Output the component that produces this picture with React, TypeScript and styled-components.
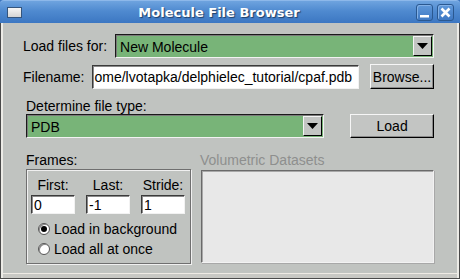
import React from "react";
import styled, { createGlobalStyle } from "styled-components";

const Global = createGlobalStyle`
  html, body { margin: 0; padding: 0; background: #ffffff; }
  body { font-family: "Liberation Sans", Arial, sans-serif; font-size: 14px; color: #000; }
  * { box-sizing: border-box; }
`;

const Window = styled.div`
  width: 460px;
  height: 279px;
  display: flex;
  flex-direction: column;
  overflow: hidden;
  background: #3b75bf;
`;

const TitleBar = styled.div`
  height: 23px;
  flex: none;
  display: flex;
  align-items: center;
  padding: 0 6px 0 7px;
  background: linear-gradient(#6ea3df 0%, #4f8ad0 45%, #3c77c2 100%);
  border-radius: 4px 4px 0 0;
  border-top: 1px solid #8db8ea;
`;

const WinIcon = styled.div`
  width: 15px;
  height: 11px;
  border: 1px solid #35557d;
  background: linear-gradient(#f6f6f6, #d4d4d4);
  margin-top: 1px;
`;

const Title = styled.div`
  flex: 1;
  text-align: center;
  font-family: "DejaVu Sans", sans-serif;
  font-weight: bold;
  font-size: 13px;
  color: #ffffff;
  text-shadow: 1px 1px 1px #1e3e68;
  padding-top: 1px;
`;

const TitleButtons = styled.div`
  display: flex;
  gap: 4px;
`;

const TitleButton = styled.div`
  width: 17px;
  height: 17px;
  border: 1px solid #2a5890;
  border-radius: 3px;
  background: linear-gradient(#5f98da, #3f79c3);
  box-shadow: inset 1px 1px 0 #82b0e6;
  display: flex;
  align-items: center;
  justify-content: center;
`;

const Body = styled.div`
  flex: 1;
  display: flex;
  flex-direction: column;
  background: #c0c3c0;
  border-left: 1px solid #4a4a4a;
  border-right: 1px solid #4a4a4a;
  border-bottom: 1px solid #4a4a4a;
  box-shadow: inset 2px 0 0 #ecebe6, inset -2px 0 0 #ecebe6, inset 0 -4px 0 #c8c8c4, inset 0 -5px 0 #eeeae4;
  padding: 11px 25px 0 22px;
`;

const Row = styled.div<{ $top?: number; $indent?: number }>`
  display: flex;
  align-items: center;
  margin-top: ${(p) => p.$top ?? 0}px;
  margin-left: ${(p) => p.$indent ?? 0}px;
`;

const Label = styled.span<{ $muted?: boolean }>`
  white-space: nowrap;
  line-height: 16px;
  color: ${(p) => (p.$muted ? "#8e8f8e" : "#000")};
`;

const Combo = styled.div<{ $w?: number }>`
  height: 24px;
  ${(p) => (p.$w ? `width: ${p.$w}px;` : "flex: 1;")}
  display: flex;
  align-items: center;
  background: #78b478;
  border-style: solid;
  border-width: 1px;
  border-color: #1a1a1a #f2f2f2 #f2f2f2 #1a1a1a;
  box-shadow: inset 1px 1px 0 #7a7a7a;
  padding: 0 1px 0 4px;
`;

const ComboText = styled.span`
  flex: 1;
  line-height: 16px;
  padding-top: 1px;
`;

const ArrowButton = styled.div`
  width: 19px;
  height: 20px;
  background: #c3c5c3;
  border-style: solid;
  border-width: 1px;
  border-color: #f4f4f4 #000 #000 #f4f4f4;
  display: flex;
  align-items: center;
  justify-content: center;
`;

const Entry = styled.div<{ $w?: number; $h?: number }>`
  ${(p) => (p.$w ? `width: ${p.$w}px;` : "flex: 1;")}
  height: ${(p) => p.$h ?? 24}px;
  background: #ffffff;
  border-style: solid;
  border-width: 1px;
  border-color: #3a3a3a #f2f2f2 #f2f2f2 #3a3a3a;
  box-shadow: inset 1px 1px 0 #8a8a8a;
  display: flex;
  align-items: center;
  overflow: hidden;
  white-space: nowrap;
  padding: 0 2px 0 2px;
  line-height: 16px;
`;

const Button = styled.div<{ $w: number; $h?: number }>`
  width: ${(p) => p.$w}px;
  height: ${(p) => p.$h ?? 25}px;
  background: #c3c5c3;
  border-style: solid;
  border-width: 1px;
  border-color: #f6f6f6 #000 #000 #f6f6f6;
  box-shadow: inset -1px -1px 0 #8a8a8a;
  display: flex;
  align-items: center;
  justify-content: center;
  line-height: 16px;
`;

const Panels = styled.div`
  display: flex;
  margin-top: 1px;
  margin-left: 3px;
`;

const FramesBox = styled.div`
  width: 165px;
  height: 95px;
  border: 1px solid #6f6f6f;
  box-shadow: 1px 1px 0 #f0f0f0, inset 1px 1px 0 #f0f0f0;
  padding: 7px 0 0 4px;
  display: flex;
  flex-direction: column;
`;

const FieldGrid = styled.div`
  display: grid;
  grid-template-columns: repeat(3, 44px);
  column-gap: 11px;
  row-gap: 2px;
  justify-items: center;
`;

const FieldLabel = styled.span`
  line-height: 16px;
`;

const RadioList = styled.div`
  display: flex;
  flex-direction: column;
  gap: 4px;
  margin-top: 7px;
  padding-left: 7px;
`;

const RadioRow = styled.div`
  display: flex;
  align-items: center;
  gap: 4px;
  line-height: 16px;
`;

const RadioDot = styled.div<{ $on?: boolean }>`
  width: 12px;
  height: 12px;
  border-radius: 50%;
  background: #ffffff;
  border: 1px solid #555;
  box-shadow: inset 1px 1px 0 #8a8a8a;
  display: flex;
  align-items: center;
  justify-content: center;
  &::after {
    content: "";
    width: 6px;
    height: 6px;
    border-radius: 50%;
    background: ${(p) => (p.$on ? "#000" : "transparent")};
  }
`;

const VolBox = styled.div`
  width: 233px;
  height: 93px;
  margin-left: 10px;
  margin-top: 1px;
  background: #e8e8e8;
  border-style: solid;
  border-width: 1px;
  border-color: #6a6a6a #f2f2f2 #f2f2f2 #6a6a6a;
  box-shadow: inset 1px 1px 0 #a8a8a8, 1px 1px 0 #a8a8a8;
`;

const Down = () => (
  <svg width="11" height="7" viewBox="0 0 11 7">
    <polygon points="0,0 11,0 5.5,6" fill="#000" />
  </svg>
);

export default function App() {
  return (
    <>
      <Global />
      <Window>
        <TitleBar>
          <WinIcon />
          <Title>Molecule File Browser</Title>
          <TitleButtons>
            <TitleButton>
              <svg width="11" height="11" viewBox="0 0 11 11">
                <rect x="1" y="8" width="9" height="2.5" fill="#fff" />
              </svg>
            </TitleButton>
            <TitleButton>
              <svg width="11" height="11" viewBox="0 0 11 11">
                <path d="M1.5 1.5 L9.5 9.5 M9.5 1.5 L1.5 9.5" stroke="#fff" strokeWidth="2.6" />
              </svg>
            </TitleButton>
          </TitleButtons>
        </TitleBar>
        <Body>
          <Row>
            <Label>Load files for:</Label>
            <Combo style={{ marginLeft: 8 }}>
              <ComboText>New Molecule</ComboText>
              <ArrowButton>
                <Down />
              </ArrowButton>
            </Combo>
          </Row>
          <Row $top={6}>
            <Label>Filename:</Label>
            <Entry style={{ marginLeft: 8, paddingLeft: 1 }} $h={24}>
              ome/lvotapka/delphielec_tutorial/cpaf.pdb
            </Entry>
            <Button $w={64} style={{ marginLeft: 11 }}>
              Browse...
            </Button>
          </Row>
          <Row $top={9} $indent={3}>
            <Label>Determine file type:</Label>
          </Row>
          <Row $top={0} $indent={3}>
            <Combo $w={299}>
              <ComboText>PDB</ComboText>
              <ArrowButton>
                <Down />
              </ArrowButton>
            </Combo>
            <Button $w={84} $h={24} style={{ marginLeft: 26 }}>
              Load
            </Button>
          </Row>
          <Row $top={14} $indent={3}>
            <Label style={{ width: 174 }}>Frames:</Label>
            <Label $muted>Volumetric Datasets</Label>
          </Row>
          <Panels>
            <FramesBox>
              <FieldGrid>
                <FieldLabel>First:</FieldLabel>
                <FieldLabel>Last:</FieldLabel>
                <FieldLabel>Stride:</FieldLabel>
                <Entry $w={44} $h={19}>0</Entry>
                <Entry $w={44} $h={19}>-1</Entry>
                <Entry $w={44} $h={19}>1</Entry>
              </FieldGrid>
              <RadioList>
                <RadioRow>
                  <RadioDot $on />
                  Load in background
                </RadioRow>
                <RadioRow>
                  <RadioDot />
                  Load all at once
                </RadioRow>
              </RadioList>
            </FramesBox>
            <VolBox />
          </Panels>
        </Body>
      </Window>
    </>
  );
}
